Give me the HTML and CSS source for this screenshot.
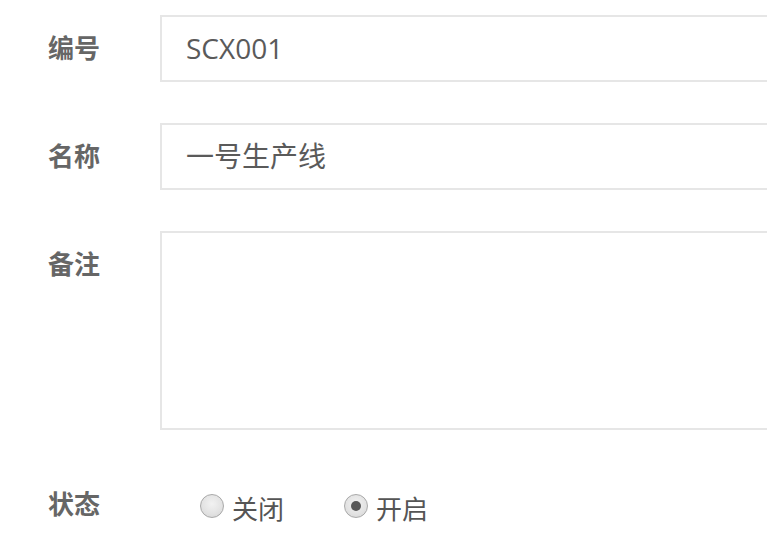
FILE: index.html
```html
<!DOCTYPE html>
<html lang="zh-CN">
<head>
<meta charset="utf-8">
<title>生产线</title>
<link rel="stylesheet" href="styles.css">
</head>
<body>
<form class="form">
  <div class="row">
    <label class="label">编号</label>
    <div class="field"><div class="input">SCX001</div></div>
  </div>
  <div class="row">
    <label class="label">名称</label>
    <div class="field"><div class="input">一号生产线</div></div>
  </div>
  <div class="row">
    <label class="label">备注</label>
    <div class="field"><div class="textarea"></div></div>
  </div>
  <div class="row">
    <label class="label">状态</label>
    <div class="radios">
      <span class="radio-item"><span class="radio"></span><span class="radio-text">关闭</span></span>
      <span class="radio-item"><span class="radio checked"></span><span class="radio-text">开启</span></span>
    </div>
  </div>
</form>
</body>
</html>
```

FILE: styles.css
```css
html, body {
  margin: 0;
  padding: 0;
  background: #fff;
  overflow: hidden;
}
body {
  width: 767px;
  height: 549px;
  font-family: "Open Sans", "Noto Sans CJK SC", sans-serif;
}
.form {
  padding-top: 15px;
  display: flex;
  flex-direction: column;
  gap: 41px;
}
.row {
  display: flex;
  align-items: flex-start;
}
.label {
  width: 160px;
  padding-left: 48px;
  box-sizing: border-box;
  flex: none;
  font-size: 26px;
  font-weight: bold;
  color: #666;
  line-height: 67px;
  height: 67px;
}
.field {
  flex: 1;
  min-width: 0;
}
.input {
  height: 67px;
  box-sizing: border-box;
  border: 2px solid #e6e6e6;
  border-right: none;
  padding-left: 24px;
  font-size: 28px;
  line-height: 63px;
  color: #5a5a5a;
}
.textarea {
  height: 199px;
  box-sizing: border-box;
  border: 2px solid #e6e6e6;
  border-right: none;
}
.radios {
  display: flex;
  align-items: center;
  height: 67px;
  padding-left: 40px;
  gap: 60px;
  padding-top: 4px;
}
.radio-item {
  display: flex;
  align-items: center;
  gap: 8px;
}
.radio {
  width: 24px;
  height: 24px;
  box-sizing: border-box;
  border-radius: 50%;
  border: 1px solid #a9a9a9;
  background: radial-gradient(circle at 50% 40%, #f2f2f2 0%, #e2e2e2 60%, #d2d2d2 100%);
  position: relative;
  margin-top: -6px;
}
.radio.checked::after {
  content: "";
  position: absolute;
  left: 6px;
  top: 6px;
  width: 10px;
  height: 10px;
  border-radius: 50%;
  background: #585858;
}
.radio-text {
  font-size: 26px;
  color: #555;
  line-height: 36px;
}
```
